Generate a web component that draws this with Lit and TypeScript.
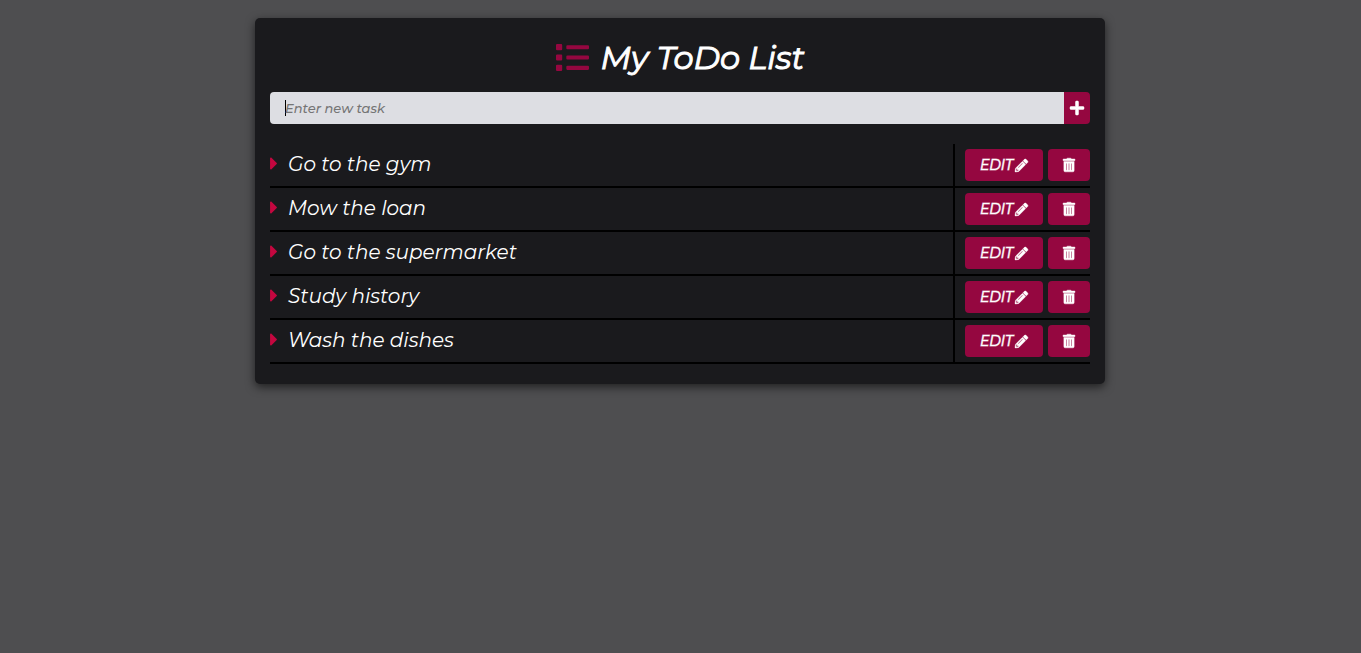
import { LitElement, html, css, svg } from "lit";
import { customElement, state, query } from "lit/decorators.js";

const icon = (name: string, width: number, path: string) => html`
  <svg class="icon ${name}" viewBox="0 0 ${width} 512" aria-hidden="true">
    ${svg`<path d=${path}></path>`}
  </svg>
`;

const listIcon = () =>
  icon(
    "list-icon",
    512,
    "M80 368H16a16 16 0 0 0-16 16v64a16 16 0 0 0 16 16h64a16 16 0 0 0 16-16v-64a16 16 0 0 0-16-16zm0-320H16A16 16 0 0 0 0 64v64a16 16 0 0 0 16 16h64a16 16 0 0 0 16-16V64a16 16 0 0 0-16-16zm0 160H16a16 16 0 0 0-16 16v64a16 16 0 0 0 16 16h64a16 16 0 0 0 16-16v-64a16 16 0 0 0-16-16zm416 176H176a16 16 0 0 0-16 16v32a16 16 0 0 0 16 16h320a16 16 0 0 0 16-16v-32a16 16 0 0 0-16-16zm0-320H176a16 16 0 0 0-16 16v32a16 16 0 0 0 16 16h320a16 16 0 0 0 16-16V80a16 16 0 0 0-16-16zm0 160H176a16 16 0 0 0-16 16v32a16 16 0 0 0 16 16h320a16 16 0 0 0 16-16v-32a16 16 0 0 0-16-16z"
  );

const plusIcon = () =>
  icon(
    "plus-icon",
    448,
    "M416 208H272V64c0-17.67-14.33-32-32-32h-32c-17.67 0-32 14.33-32 32v144H32c-17.67 0-32 14.33-32 32v32c0 17.67 14.33 32 32 32h144v144c0 17.67 14.33 32 32 32h32c17.67 0 32-14.33 32-32V304h144c17.67 0 32-14.33 32-32v-32c0-17.67-14.33-32-32-32z"
  );

const caretIcon = () =>
  icon(
    "caret-icon",
    192,
    "M0 384.662V127.338c0-17.818 21.543-26.741 34.142-14.142l128.662 128.662c7.81 7.81 7.81 20.474 0 28.284L34.142 398.804C21.543 411.404 0 402.48 0 384.662z"
  );

const pencilIcon = () =>
  icon(
    "pencil-icon",
    512,
    "M497.9 142.1l-46.1 46.1c-4.7 4.7-12.3 4.7-17 0l-111-111c-4.7-4.7-4.7-12.3 0-17l46.1-46.1c18.7-18.7 49.1-18.7 67.9 0l60.1 60.1c18.8 18.7 18.8 49.1 0 67.9zM284.2 99.8L21.6 362.4.4 483.9c-2.9 16.4 11.4 30.6 27.8 27.8l121.5-21.3 262.6-262.6c4.7-4.7 4.7-12.3 0-17l-111-111c-4.8-4.7-12.4-4.7-17.1 0zM124.1 339.9c-5.5-5.5-5.5-14.3 0-19.8l154-154c5.5-5.5 14.3-5.5 19.8 0s5.5 14.3 0 19.8l-154 154c-5.5 5.5-14.3 5.5-19.8 0zM88 424h48v36.3l-64.5 11.3-31.1-31.1L51.7 376H88v48z"
  );

const trashIcon = () =>
  icon(
    "trash-icon",
    448,
    "M32 464a48 48 0 0 0 48 48h288a48 48 0 0 0 48-48V128H32zm272-256a16 16 0 0 1 32 0v224a16 16 0 0 1-32 0zm-96 0a16 16 0 0 1 32 0v224a16 16 0 0 1-32 0zm-96 0a16 16 0 0 1 32 0v224a16 16 0 0 1-32 0zM432 32H312l-9.4-18.7A24 24 0 0 0 281.1 0H166.8a23.72 23.72 0 0 0-21.4 13.3L136 32H16A16 16 0 0 0 0 48v32a16 16 0 0 0 16 16h416a16 16 0 0 0 16-16V48a16 16 0 0 0-16-16z"
  );

@customElement("app-root")
export class AppRoot extends LitElement {
  static styles = css`
    :host {
      display: block;
      box-sizing: border-box;
      min-height: 100vh;
      padding: 18px 16px 18px 15px;
      background: #4e4e50;
      color: #fff;
      font-family: Montserrat, Inter, sans-serif;
      font-style: italic;
    }

    .card {
      box-sizing: border-box;
      max-width: 850px;
      margin: 0 auto;
      padding: 20px 15px;
      border-radius: 5px;
      background: #1a1a1d;
      box-shadow: 0 3px 10px rgba(0, 0, 0, 0.6);
    }

    .icon {
      display: block;
      flex: none;
      overflow: visible;
      fill: currentColor;
    }

    .button .icon {
      stroke: currentColor;
      stroke-width: 16;
    }

    .title {
      display: flex;
      align-items: center;
      justify-content: center;
      gap: 12px;
      margin: 0 0 14px;
      font-size: 32px;
      font-weight: 400;
      line-height: 40px;
      -webkit-text-stroke: 1px currentColor;
    }

    .list-icon {
      width: 33px;
      height: 33px;
      margin-bottom: 2px;
      color: #950740;
    }

    .entry {
      display: flex;
      height: 32px;
      margin-bottom: 20px;
      border-radius: 4px;
      overflow: hidden;
    }

    .field {
      flex: 1;
      min-width: 0;
      padding: 0 15px;
      border: 0;
      border-radius: 0;
      outline: 0;
      background: #dddee3;
      color: #1a1a1d;
      font: inherit;
      font-size: 13px;
      font-weight: 500;
    }

    .field:placeholder-shown {
      background: linear-gradient(#000, #000) 15px center / 1px 16px no-repeat #dddee3;
      caret-color: transparent;
    }

    .field::placeholder {
      color: #757575;
      opacity: 1;
    }

    .button {
      display: flex;
      align-items: center;
      justify-content: center;
      gap: 2px;
      height: 32px;
      padding: 0 15px;
      border: 0;
      border-radius: 4px;
      background: #950740;
      color: #fff;
      font: inherit;
      font-size: 14px;
      font-weight: 400;
      -webkit-text-stroke: 1px rgba(255, 255, 255, 0.6);
      cursor: pointer;
    }

    .button:hover {
      background: #c3073f;
    }

    .add {
      padding: 0 6px;
      border-radius: 0;
    }

    .plus-icon {
      width: 14px;
      height: 16px;
    }

    .tasks {
      margin: 0;
      padding: 0;
      list-style: none;
    }

    .task {
      display: flex;
      align-items: stretch;
      border-bottom: 2px solid #000;
    }

    .name {
      display: flex;
      flex: 1;
      align-items: center;
      gap: 10px;
      min-width: 0;
      padding-bottom: 2px;
      font-size: 20px;
      font-weight: 400;
      line-height: 26px;
    }

    .caret-icon {
      width: 8px;
      height: 21px;
      margin-bottom: 2px;
      color: #c3073f;
    }

    .actions {
      display: flex;
      gap: 5px;
      padding: 5px 0 5px 10px;
      border-left: 2px solid #000;
    }

    .edit {
      width: 78px;
    }

    .pencil-icon {
      width: 13px;
      height: 13px;
    }

    .trash-icon {
      width: 12px;
      height: 14px;
    }
  `;

  @state() private tasks = [
    "Go to the gym",
    "Mow the loan",
    "Go to the supermarket",
    "Study history",
    "Wash the dishes",
  ];

  @query(".field") private field!: HTMLInputElement;

  private add(event: Event) {
    event.preventDefault();
    const name = this.field.value.trim();
    if (name) {
      this.tasks = [...this.tasks, name];
      this.field.value = "";
    }
    this.field.focus();
  }

  private edit(index: number) {
    this.field.value = this.tasks[index];
    this.discard(index);
    this.field.focus();
  }

  private discard(index: number) {
    this.tasks = this.tasks.filter((_, i) => i !== index);
  }

  render() {
    return html`
      <main class="card">
        <h1 class="title">${listIcon()}<span>My ToDo List</span></h1>
        <form class="entry" @submit=${this.add}>
          <input
            class="field"
            type="text"
            placeholder="Enter new task"
            aria-label="Enter new task"
            autocomplete="off"
          />
          <button class="button add" type="submit" aria-label="Add task">${plusIcon()}</button>
        </form>
        <ul class="tasks">
          ${this.tasks.map(
            (name, index) => html`
              <li class="task">
                <div class="name">${caretIcon()}<span>${name}</span></div>
                <div class="actions">
                  <button class="button edit" type="button" @click=${() => this.edit(index)}>
                    <span>EDIT</span>${pencilIcon()}
                  </button>
                  <button
                    class="button"
                    type="button"
                    aria-label="Delete ${name}"
                    @click=${() => this.discard(index)}
                  >
                    ${trashIcon()}
                  </button>
                </div>
              </li>
            `
          )}
        </ul>
      </main>
    `;
  }
}
